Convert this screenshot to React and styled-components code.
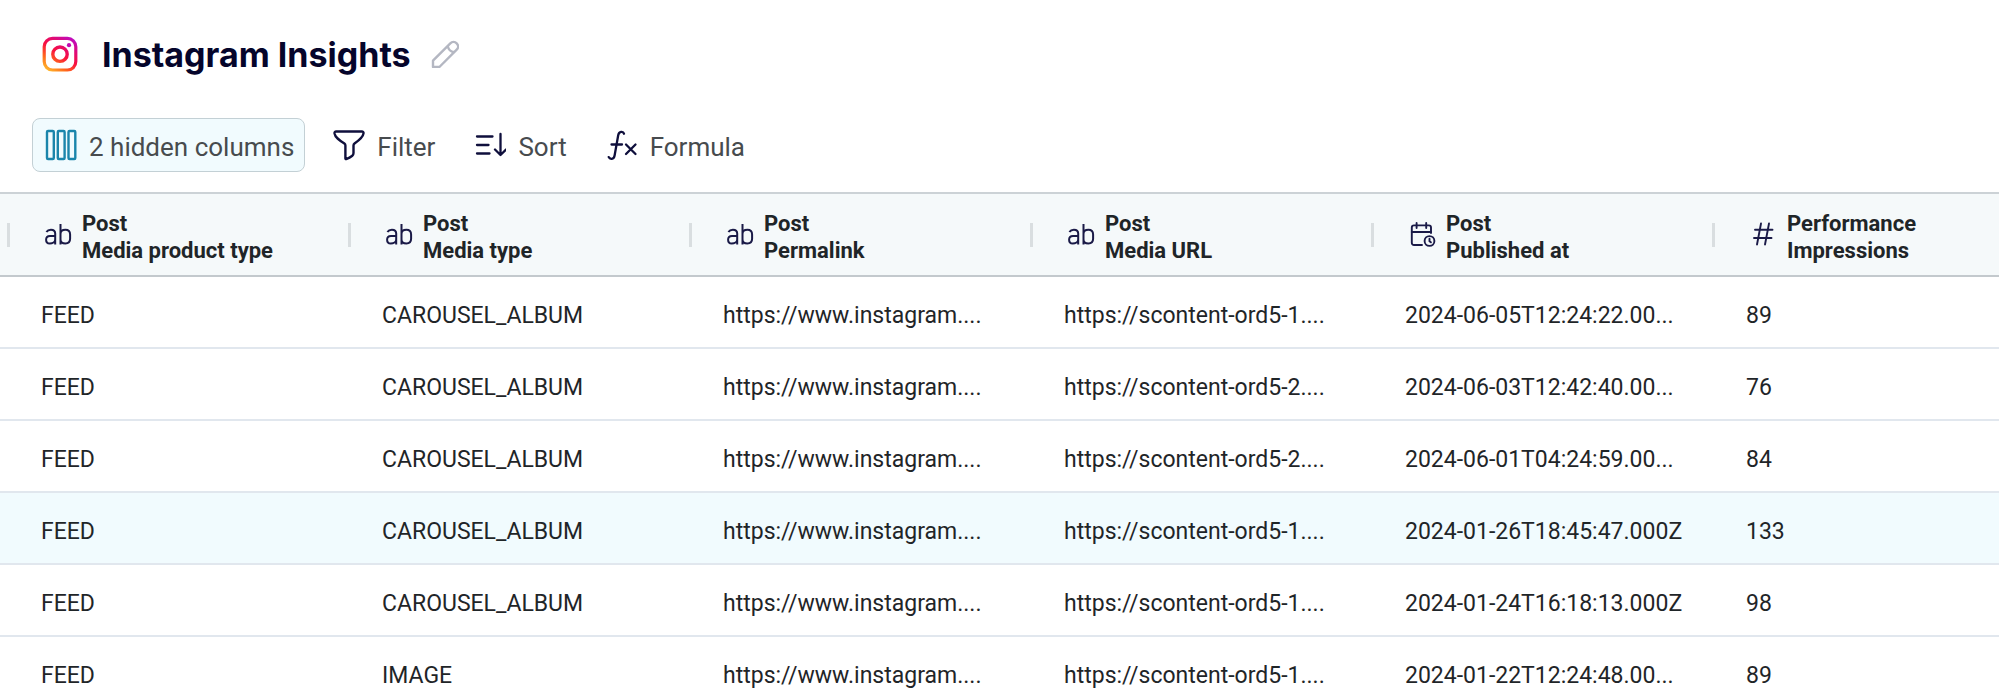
import React from 'react'
import styled, { createGlobalStyle } from 'styled-components'

const GlobalStyle = createGlobalStyle`
  *, *::before, *::after {
    box-sizing: border-box;
  }
  body {
    margin: 0;
    background: #fff;
    color: #1f2528;
    font-family: Roboto, "Liberation Sans", sans-serif;
    overflow: hidden;
  }
  button {
    font: inherit;
    color: inherit;
    border: none;
    background: none;
    padding: 0;
    cursor: pointer;
  }
  svg {
    display: block;
    flex: none;
  }
`

const columns = [
  { group: 'Post', name: 'Media product type', type: 'text' },
  { group: 'Post', name: 'Media type', type: 'text' },
  { group: 'Post', name: 'Permalink', type: 'text' },
  { group: 'Post', name: 'Media URL', type: 'text' },
  { group: 'Post', name: 'Published at', type: 'date' },
  { group: 'Performance', name: 'Impressions', type: 'number' },
]

const rows = [
  ['FEED', 'CAROUSEL_ALBUM', 'https://www.instagram....', 'https://scontent-ord5-1....', '2024-06-05T12:24:22.00...', '89'],
  ['FEED', 'CAROUSEL_ALBUM', 'https://www.instagram....', 'https://scontent-ord5-2....', '2024-06-03T12:42:40.00...', '76'],
  ['FEED', 'CAROUSEL_ALBUM', 'https://www.instagram....', 'https://scontent-ord5-2....', '2024-06-01T04:24:59.00...', '84'],
  ['FEED', 'CAROUSEL_ALBUM', 'https://www.instagram....', 'https://scontent-ord5-1....', '2024-01-26T18:45:47.000Z', '133'],
  ['FEED', 'CAROUSEL_ALBUM', 'https://www.instagram....', 'https://scontent-ord5-1....', '2024-01-24T16:18:13.000Z', '98'],
  ['FEED', 'IMAGE', 'https://www.instagram....', 'https://scontent-ord5-1....', '2024-01-22T12:24:48.00...', '89'],
]

const activeRow = 3

const InstagramIcon = () => (
  <svg width="36" height="36" viewBox="0 0 36 36" fill="none" aria-hidden="true">
    <defs>
      <linearGradient id="insta" x1="6" y1="36" x2="30" y2="0" gradientUnits="userSpaceOnUse">
        <stop offset="0" stopColor="#ffc02e" />
        <stop offset="0.25" stopColor="#ff6a1c" />
        <stop offset="0.5" stopColor="#f9103f" />
        <stop offset="0.75" stopColor="#dd0a7c" />
        <stop offset="1" stopColor="#b80ccf" />
      </linearGradient>
    </defs>
    <rect x="2.2" y="2.4" width="31.6" height="31.6" rx="8.4" stroke="url(#insta)" strokeWidth="3.2" />
    <circle cx="18" cy="18.2" r="7.2" stroke="url(#insta)" strokeWidth="3.4" />
    <circle cx="27" cy="9.2" r="2.1" fill="#c20bb4" />
  </svg>
)

const PencilIcon = () => (
  <svg width="28" height="28" viewBox="0 0 28 28" fill="none" stroke="#b4b7c2" strokeWidth="2.4" strokeLinejoin="round" aria-hidden="true">
    <path d="M2 27v-6.4L19.3 3.3a4.5 4.5 0 0 1 6.4 6.4L8.4 27z" />
    <path d="M16.7 5.9c.6 3.3 3.1 5.8 6.4 6.4" />
  </svg>
)

const ColumnsIcon = () => (
  <svg width="32" height="32" viewBox="0 0 32 32" fill="none" stroke="#1b85ab" strokeWidth="2.4" aria-hidden="true">
    <rect x="2" y="2" width="6.8" height="28" rx="1" />
    <rect x="12.8" y="2" width="6.8" height="28" rx="1" />
    <rect x="23.5" y="2" width="6.8" height="28" rx="1" />
  </svg>
)

const FilterIcon = () => (
  <svg width="32" height="32" viewBox="0 0 32 32" fill="none" stroke="#0f0f3c" strokeWidth="2.4" strokeLinejoin="round" aria-hidden="true">
    <path d="M3.2 2.5h25.6c1.2 0 1.9.8 1.7 1.9-.5 4.2-4.5 7-9 10.1-.7.5-1 1.2-1 2v7.6c0 1.2-.3 2-1.2 2.7-1.3 1-3 2.1-6.2 3.3-.4.1-.7-.1-.7-.5V16.5c0-.8-.3-1.5-1-2C6.5 11.4 2.1 8.6 1.5 4.4c-.1-1.1.5-1.9 1.7-1.9z" />
  </svg>
)

const SortIcon = () => (
  <svg width="32" height="32" viewBox="0 0 32 32" fill="none" stroke="#0f0f3c" strokeWidth="2.3" strokeLinecap="round" strokeLinejoin="round" aria-hidden="true">
    <path d="M3 7.5h15.5M3 16h11.5M3 24.5h12.5" />
    <path d="M26.5 5v21M21 20.5l5.5 5.5 5.5-5.5" />
  </svg>
)

const FormulaIcon = () => (
  <svg width="32" height="32" viewBox="0 0 32 32" fill="none" stroke="#0f0f3c" strokeWidth="2.3" strokeLinecap="round" aria-hidden="true">
    <path d="M18 4.7c-.8-2.6-5-2.7-5.8 1.5L8.6 26.5c-.7 4.2-4.8 4-5.9 1.6" />
    <path d="M5.5 15.5h10.5" />
    <path d="M20 15.5l9.5 9.5M29.5 15.5L20 25" />
  </svg>
)

const TextIcon = () => (
  <svg width="28" height="28" viewBox="0 0 28 28" fill="none" stroke="#1a1a47" strokeWidth="2" aria-hidden="true">
    <path d="M2.4 11c1-1.6 2.5-2.3 4.5-2.3 2.8 0 4.3 1.4 4.3 3.9v10.9M11.2 15H6c-2.5 0-3.9 1.3-3.9 3.7 0 2.3 1.4 3.8 3.6 3.8 2.6 0 5.5-1.4 5.5-4.3" />
    <path d="M16.5 3v20.5M16.5 13c0-2.7 1.9-4.2 4.9-4.2s4.7 1.7 4.7 4.7v4.3c0 3-1.7 4.7-4.7 4.7s-4.9-1.5-4.9-4.2" />
  </svg>
)

const DateIcon = () => (
  <svg width="28" height="28" viewBox="0 0 28 28" fill="none" stroke="#1a1a47" strokeWidth="1.9" strokeLinecap="round" strokeLinejoin="round" aria-hidden="true">
    <path d="M14 24H6c-1.4 0-2.2-.8-2.2-2.2V6.6c0-1.4.8-2.2 2.2-2.2h14.8c1.4 0 2.2.8 2.2 2.2V12" />
    <path d="M3.8 11H23M8.6 2v5M18.2 2v5" />
    <circle cx="21.5" cy="20" r="4.9" />
    <path d="M21.5 17.7v2.5l1.4 1.1" />
  </svg>
)

const NumberIcon = () => (
  <svg width="28" height="28" viewBox="0 0 28 28" fill="none" stroke="#1a1a47" strokeWidth="1.9" strokeLinecap="round" aria-hidden="true">
    <path d="M12 2.5l-4 21M20 2.5l-4 21M6 8.8h17.5M5 17h17.5" />
  </svg>
)

const typeIcons = { text: TextIcon, date: DateIcon, number: NumberIcon }

const App = () => {
  return (
    <Page>
      <GlobalStyle />
      <TitleBar>
        <InstagramIcon />
        <Title>Instagram Insights</Title>
        <button type="button" aria-label="Rename">
          <PencilIcon />
        </button>
      </TitleBar>

      <Toolbar>
        <ToolButton type="button" $active>
          <ColumnsIcon />
          <ToolLabel>2 hidden columns</ToolLabel>
        </ToolButton>
        <ToolButton type="button">
          <FilterIcon />
          <ToolLabel>Filter</ToolLabel>
        </ToolButton>
        <ToolButton type="button">
          <SortIcon />
          <ToolLabel>Sort</ToolLabel>
        </ToolButton>
        <ToolButton type="button">
          <FormulaIcon />
          <ToolLabel>Formula</ToolLabel>
        </ToolButton>
      </Toolbar>

      <Table>
        <thead>
          <tr>
            {columns.map(({ group, name, type }) => {
              const Icon = typeIcons[type]
              return (
                <HeadCell key={name} scope="col">
                  <HeadContent>
                    <Divider />
                    <Icon />
                    <HeadLabel>
                      {group}
                      <br />
                      {name}
                    </HeadLabel>
                  </HeadContent>
                </HeadCell>
              )
            })}
          </tr>
        </thead>
        <tbody>
          {rows.map((row, i) => (
            <Row key={i} $active={i === activeRow}>
              {row.map((value, j) => (
                <Cell key={j}>{value}</Cell>
              ))}
            </Row>
          ))}
        </tbody>
      </Table>
    </Page>
  )
}

const Page = styled.main`
  height: 100vh;
  overflow: hidden;
`

const TitleBar = styled.header`
  display: flex;
  align-items: center;
  padding: 32px 42px 0;
  height: 76px;

  button {
    margin-left: 20px;
  }
`

const Title = styled.h1`
  margin: 0 0 0 24px;
  padding-top: 2px;
  font-family: Inter, "Liberation Sans", sans-serif;
  font-size: 34px;
  line-height: 42px;
  font-weight: 700;
  color: #05052b;
`

const Toolbar = styled.div`
  display: flex;
  align-items: center;
  gap: 15px;
  padding: 42px 32px 20px;
`

const ToolButton = styled.button`
  display: flex;
  align-items: center;
  gap: 12px;
  height: 54px;
  padding: 0 10px 0 12px;
  border: 1px solid ${({ $active }) => ($active ? '#c3d0d5' : 'transparent')};
  border-radius: 8px;
  background: ${({ $active }) => ($active ? '#f1fbfe' : 'transparent')};
  font-size: 26px;
  color: #474b4e;
  white-space: nowrap;
`

const ToolLabel = styled.span`
  padding-top: 3px;
`

const Table = styled.table`
  width: 100%;
  table-layout: fixed;
  border-collapse: separate;
  border-spacing: 0;
`

const HeadCell = styled.th`
  width: 341px;
  height: 85px;
  padding: 0 0 0 7px;
  border-top: 2px solid #ccd2d6;
  border-bottom: 2px solid #c3c9cd;
  background: #f5f9fa;
  text-align: left;
  font-size: 22px;
  line-height: 27px;
  font-weight: 700;
  white-space: nowrap;

  &:last-child {
    width: auto;
  }

  svg {
    margin: 0 10px 0 34px;
  }
`

const HeadContent = styled.div`
  display: flex;
  align-items: center;
`

const HeadLabel = styled.span`
  padding-top: 4px;
`

const Divider = styled.i`
  width: 3px;
  height: 24px;
  background: #d9dee0;
`

const Row = styled.tr`
  background: ${({ $active }) => ($active ? '#f1fbfe' : '#fff')};
`

const Cell = styled.td`
  height: 72px;
  padding: 8px 0 0 41px;
  border-bottom: 2px solid #e1e7ee;
  font-size: 23px;
  line-height: 28px;
  white-space: nowrap;
`

export default App
